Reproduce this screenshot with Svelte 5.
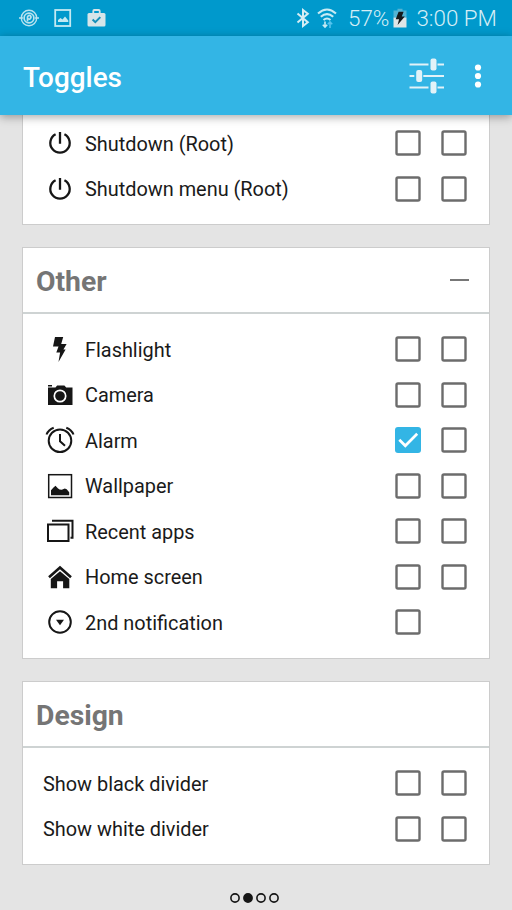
<script lang="ts">
	type Item = { icon?: string; label: string; boxes: boolean[] };
	type Group = { title?: string; collapsible?: boolean; items: Item[] };

	let groups: Group[] = $state([
		{
			items: [
				{ icon: 'power', label: 'Shutdown (Root)', boxes: [false, false] },
				{ icon: 'power', label: 'Shutdown menu (Root)', boxes: [false, false] }
			]
		},
		{
			title: 'Other',
			collapsible: true,
			items: [
				{ icon: 'flash', label: 'Flashlight', boxes: [false, false] },
				{ icon: 'camera', label: 'Camera', boxes: [false, false] },
				{ icon: 'alarm', label: 'Alarm', boxes: [true, false] },
				{ icon: 'wallpaper', label: 'Wallpaper', boxes: [false, false] },
				{ icon: 'recent', label: 'Recent apps', boxes: [false, false] },
				{ icon: 'home', label: 'Home screen', boxes: [false, false] },
				{ icon: 'notification', label: '2nd notification', boxes: [false] }
			]
		},
		{
			title: 'Design',
			items: [
				{ label: 'Show black divider', boxes: [false, false] },
				{ label: 'Show white divider', boxes: [false, false] }
			]
		}
	]);

	let page = $state(1);
</script>

{#snippet icon(name: string)}
	<svg class="icon" viewBox="0 0 30 30" fill="none" stroke="#161616" stroke-width="2">
		{#if name === 'power'}
			<path d="M10.6 6.3a9.7 9.7 0 1 0 8.8 0M15 4v11.7" stroke-width="2.3" />
		{:else if name === 'flash'}
			<path d="M10 3h8.2l-2 7h5.4l-3.2 5.5h2.2L13.5 28l1.6-9.5h-3.8l2.2-6H8z" fill="#161616" stroke="none" />
		{:else if name === 'camera'}
			<path d="M3 7.5h7.5l1.6-2h7.3l1.8 2h6.3V25H3zM3 5h4v1.5H3z" fill="#161616" stroke="none" />
			<circle cx="15" cy="16" r="5.7" stroke="#fff" stroke-width="1.7" />
		{:else if name === 'alarm'}
			<circle cx="15" cy="15.7" r="11.3" />
			<path d="M15 9v7.3l5 4.4M1.5 9.5Q3.4 4.7 8.7 2.7M28.5 9.5Q26.6 4.7 21.3 2.7" />
		{:else if name === 'wallpaper'}
			<rect x="3.7" y="3.7" width="22.8" height="22.8" stroke-width="1.5" />
			<path
				d="M6 24.2v-5l2.5-2.6 2-1.8 2.3 2.4 1.7 1.2 2.3.4 3-1.4 1.9.8 2.5 3v3z"
				fill="#161616"
				stroke="none"
			/>
		{:else if name === 'recent'}
			<rect x="3" y="8.5" width="20.5" height="16.5" />
			<path d="M7 4.8h20.5v17h-2" />
		{:else if name === 'home'}
			<path d="M4 15.2 15 5.6l11 9.6" stroke-width="2.6" />
			<path d="M15 9.3 24.3 17v9.2h-6.2v-7h-6v7H5.8V17z" fill="#161616" stroke="none" />
		{:else}
			<circle cx="15" cy="15" r="10.8" />
			<path d="M11 12.7h8L15 18.2z" fill="#161616" stroke="none" />
		{/if}
	</svg>
{/snippet}

<div class="screen">
	<div class="status-bar">
		<div class="notices">
			<svg width="20" height="20" viewBox="0 0 20 20" fill="none" stroke="#b9e3ef">
				<circle cx="10" cy="10" r="7.7" stroke-width="1.4" />
				<circle cx="10" cy="10" r="4.9" stroke-width="1.7" />
				<path d="M0 10h4M16 10h4M8.5 13.5V8.8q1-2 2.8-1.2 1.4 1.6-.1 3.1-1 .7-2 .1" stroke-width="1.7" />
			</svg>
			<svg width="18" height="18" viewBox="0 0 18 18" fill="none" stroke="#c3e9f2">
				<rect x="1.2" y="1" width="15" height="16" stroke-width="1.8" />
				<path d="M4 13v-2l2.5-2 2 1.5 2.5-3 3.3 4V13z" fill="#c3e9f2" stroke="none" />
			</svg>
			<svg width="19" height="18" viewBox="0 0 19 18" fill="none">
				<path d="M6.3 5V2q0-1 1-1h4.4q1 0 1 1v3" stroke="#d6e5e9" stroke-width="1.8" />
				<rect x=".5" y="4" width="18" height="13.5" rx="1.5" fill="#d6e5e9" />
				<path d="m5.6 10.5 2.7 2.7 5-5.1" stroke="#168fb9" stroke-width="2" />
			</svg>
		</div>
		<div class="system">
			<svg width="14" height="20" viewBox="0 0 14 20" fill="none" stroke="#d5edf4" stroke-width="2">
				<path d="m1.5 5.5 10.3 8.8L7 18V2l4.8 3.7L1.5 14.5" />
			</svg>
			<svg class="wifi" width="20" height="21" viewBox="0 0 20 21" fill="none" stroke="#c8ebf4" stroke-width="2.1">
				<path d="M1 5.5q9-8 18 0M3.8 8.8q6.2-5.5 12.4 0M6.5 12q3.5-3 7 0" />
				<path d="M8 13.5V19M5.8 16.8 8 19l2.2-2.2" stroke-width="1.6" />
				<path d="M13 20v-6m-2.2 2.2L13 14l2.2 2.2" stroke="#56c4ee" stroke-width="1.6" />
			</svg>
			<span class="percent">57%</span>
			<svg class="battery" width="14" height="20" viewBox="0 0 14 20">
				<path d="M.5 2.5h4V.7h5v1.8h4v7H.5z" fill="#53b4d3" />
				<path d="M.5 9.5h13v10H.5z" fill="#dfe5e6" />
				<path d="M5.6 3.8h5L8.8 8.5h3L4.6 17l1.5-5.7H2.7z" fill="#15191b" />
			</svg>
			<span class="clock">3:00 PM</span>
		</div>
	</div>

	<header class="app-bar">
		<h1>Toggles</h1>
		<button class="tune" aria-label="Adjust">
			<svg width="36" height="36" viewBox="0 0 36 36" fill="#e2f2f8">
				<path
					d="M1.5 5.6h19v2h-19zM29.5 5.6H36v2h-6.5zM1.5 17h4.8v2H1.5zM15.3 17H36v2H15.3zM1.5 28.4h19v2h-19zM29.5 28.4H36v2h-6.5z"
				/>
				<rect x="22.5" y=".6" width="6" height="12" rx="2" />
				<rect x="8.2" y="12" width="6" height="12" rx="2" />
				<rect x="22.5" y="23.4" width="6" height="12" rx="2" />
			</svg>
		</button>
		<button class="more" aria-label="More options">
			<svg width="8" height="26" viewBox="0 0 8 26" fill="#fff">
				<circle cx="4" cy="4.5" r="3.1" />
				<circle cx="4" cy="13" r="3.1" />
				<circle cx="4" cy="21.5" r="3.1" />
			</svg>
		</button>
	</header>

	<main>
		{#each groups as group}
			<section class="card" class:scrolled={!group.title}>
				{#if group.title}
					<div class="card-header">
						<h2>{group.title}</h2>
						{#if group.collapsible}
							<span class="collapse"></span>
						{/if}
					</div>
				{/if}
				<div class="card-body">
					{#each group.items as item}
						<div class="row">
							{#if item.icon}
								{@render icon(item.icon)}
							{/if}
							<span class="label">{item.label}</span>
							<div class="boxes">
								{#each item.boxes as checked, i}
									<button
										class="box"
										class:checked
										role="checkbox"
										aria-checked={checked}
										aria-label={item.label}
										onclick={() => (item.boxes[i] = !checked)}
									>
										<svg width="26" height="26" viewBox="0 0 26 26" fill="none">
											{#if checked}
												<path d="m4.3 12.8 6 6L22.2 6.8" stroke="#fff" stroke-width="2.7" />
											{:else}
												<rect x="1.5" y="1.5" width="23" height="23" rx="1.5" stroke="#6c6c6c" stroke-width="2.4" />
											{/if}
										</svg>
									</button>
								{/each}
							</div>
						</div>
					{/each}
				</div>
			</section>
		{/each}
	</main>

	<nav class="pager">
		{#each [0, 1, 2, 3] as n}
			<button aria-label="Page {n + 1}" onclick={() => (page = n)}>
				<svg width="10" height="10" viewBox="0 0 10 10" stroke="#161616" stroke-width="1.6">
					<circle cx="5" cy="5" r="4.1" fill={n === page ? '#161616' : 'none'} />
				</svg>
			</button>
		{/each}
	</nav>
</div>

<style>
	:global(body) {
		margin: 0;
	}

	.screen {
		display: flex;
		flex-direction: column;
		width: 512px;
		height: 910px;
		overflow: hidden;
		background: #e4e4e4;
		font-family: Roboto, sans-serif;
		color: #1a1a1a;
	}

	button {
		padding: 0;
		border: 0;
		background: none;
	}

	svg {
		display: block;
		flex: none;
	}

	.status-bar {
		display: flex;
		flex: none;
		justify-content: space-between;
		align-items: center;
		height: 36px;
		padding: 0 15px 0 19px;
		box-sizing: border-box;
		background: #0099cc;
	}

	.notices {
		display: flex;
		align-items: center;
		gap: 15px;
	}

	.system {
		display: flex;
		align-items: center;
		color: #d5eef6;
		font-size: 22.4px;
		font-weight: 350;
		line-height: 26px;
		white-space: nowrap;
	}

	.wifi {
		margin: 0 11px 0 7px;
	}

	.battery {
		margin: 0 9px 0 4px;
	}

	.app-bar {
		position: relative;
		z-index: 1;
		display: flex;
		flex: none;
		align-items: center;
		height: 79px;
		padding: 0 30px 0 23px;
		box-sizing: border-box;
		background: #33b5e5;
		box-shadow: 0 2px 9px rgba(0, 0, 0, 0.35);
	}

	h1 {
		flex: 1;
		margin: 4px 0 0;
		color: #fff;
		font-size: 27.9px;
		font-weight: 500;
		line-height: 36px;
	}

	.more {
		margin-left: 30px;
	}

	main {
		display: flex;
		flex-direction: column;
		gap: 22px;
		padding: 0 22px;
	}

	.card {
		box-sizing: border-box;
		border: 1px solid #ccc;
		background: #fff;
	}

	.scrolled {
		border-top: 0;
	}

	.card-header {
		display: flex;
		justify-content: space-between;
		align-items: center;
		height: 64px;
		padding: 0 20px 0 13px;
		border-bottom: 2px solid #ced3d3;
	}

	h2 {
		margin: 4px 0 0;
		color: #757575;
		font-size: 28.3px;
		line-height: 32px;
		font-weight: 700;
	}

	.collapse {
		width: 19px;
		height: 2px;
		background: #777;
	}

	.card-body {
		padding: 13px 22px 12.5px 20px;
	}

	.scrolled .card-body {
		padding-top: 5.5px;
		padding-bottom: 12px;
	}

	.row {
		display: flex;
		align-items: center;
		height: 45.5px;
	}

	.icon {
		width: 30px;
		height: 30px;
		margin: 0 10px 0 2px;
	}

	.label {
		flex: 1;
		font-size: 19.9px;
		line-height: 24px;
		padding-top: 3px;
	}

	.boxes {
		display: grid;
		grid-template-columns: 26px 26px;
		gap: 20px;
	}

	.box {
		width: 26px;
		height: 26px;
		border-radius: 3px;
	}

	.checked {
		background: #33b5e5;
	}

	.pager {
		display: flex;
		justify-content: center;
		gap: 3px;
		margin-top: 28px;
		padding-right: 4px;
	}
</style>
